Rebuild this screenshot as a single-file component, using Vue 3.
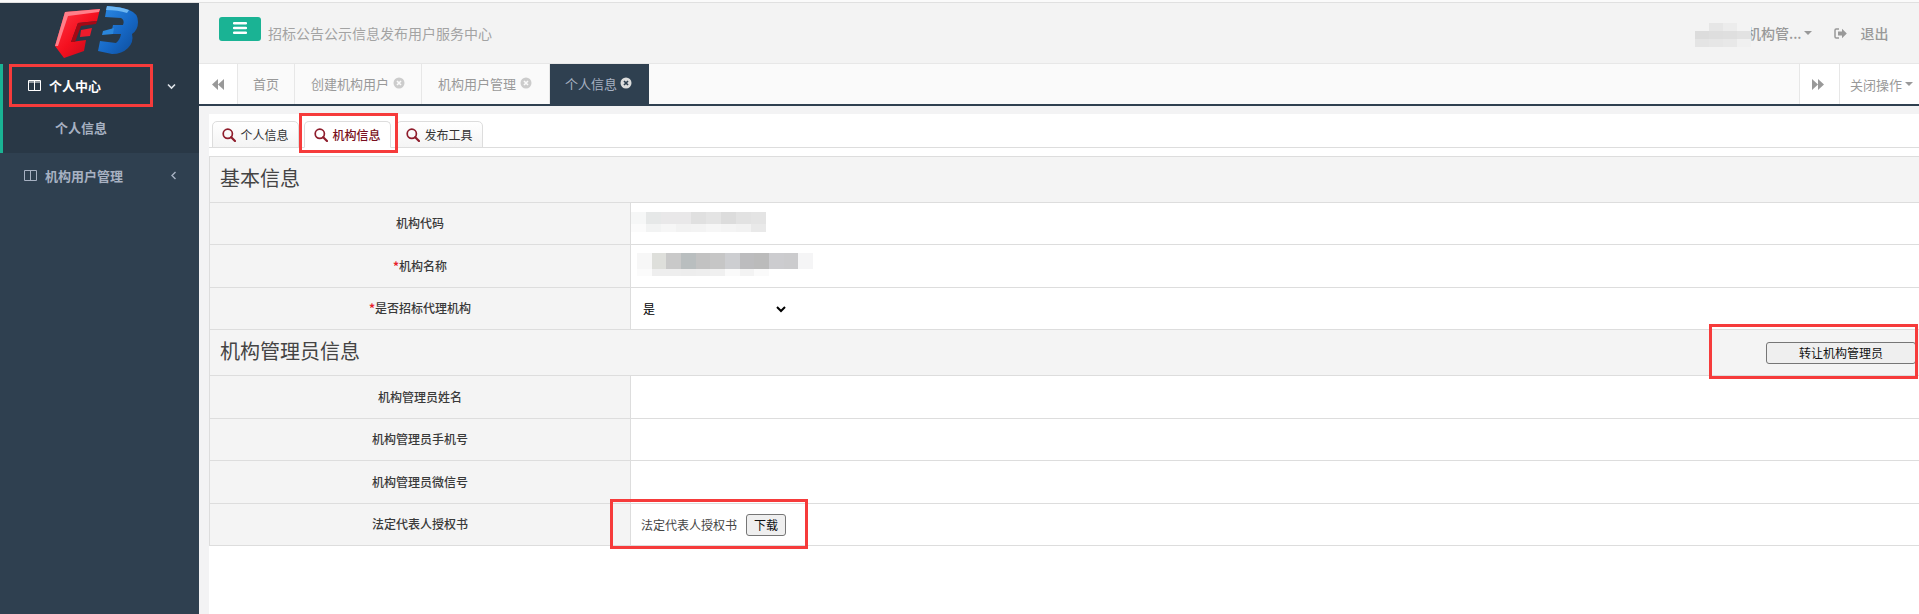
<script setup>
const shades1 = [
  ['#f6f7f7', '#e6e8e8', '#e9e8e9', '#e9e8e9', '#e0e0e0', '#e4e4e4', '#dcdcdc', '#e2e2e2', '#e4e4e4'],
  ['#fbfbfb', '#f2f3f3', '#f6f6f6', '#f2f2f2', '#f3f3f3', '#f6f6f6', '#f4f4f4', '#f2f2f2', '#e9e9e9']
]
const shades2 = [
  ['#f7f7f7', '#dedfdb', '#c9c9c9', '#b9bebf', '#c2c2c2', '#c6c6c6', '#cdced1', '#bcbcbe', '#bbbbbb', '#cccccf', '#cbcbcd', '#f5f5f6'],
  ['#fbfbfb', '#eeeeee', '#eeeeee', '#ededed', '#eeeeee', '#f0f0f0', '#fafafa', '#f3f3f3', '#fafafa', '#ffffff', '#ffffff', '#ffffff']
]
const shades3 = [
  ['#f3f3f3', '#e6e6e6', '#ececec', '#f3f3f3'],
  ['#dcdcdc', '#dedede', '#dfdfdf', '#e2e2e2'],
  ['#e4e4e4', '#e6e6e6', '#e8e8e8', '#f0f0f0']
]
const pageTabs = [
  { name: '创建机构用户', cls: '' },
  { name: '机构用户管理', cls: 'wider' }
]
const innerTabs = [
  { name: '个人信息', active: false },
  { name: '机构信息', active: true },
  { name: '发布工具', active: false }
]
const adminRows = [
  { label: '机构管理员姓名', cls: 'h43' },
  { label: '机构管理员手机号', cls: 'h42' },
  { label: '机构管理员微信号', cls: 'h43' }
]
</script>

<template>
  <div class="page">
    <div class="topline"></div>
    <div class="frame">
      <aside class="sidebar">
        <div class="logo">
          <svg width="88" height="56" viewBox="0 0 88 56">
            <defs>
              <linearGradient id="r" x1="0" y1="0" x2="1" y2="1">
                <stop offset="0" stop-color="#ff3a48" />
                <stop offset="0.5" stop-color="#f5101f" />
                <stop offset="1" stop-color="#b8081a" />
              </linearGradient>
              <linearGradient id="b" x1="0" y1="0" x2="1" y2="1">
                <stop offset="0" stop-color="#2f8de6" />
                <stop offset="0.55" stop-color="#1668c6" />
                <stop offset="1" stop-color="#0d4a96" />
              </linearGradient>
            </defs>
            <path d="M11 8 L46 5 L43 17 L24 19 L17 38 L32 36 L30 47 L10 54 L1 42 Z" fill="url(#r)" />
            <path d="M11 8 L46 5 L45 8 L14 12 L4 42 L1 42 Z" fill="#ff7f8a" />
            <path d="M24 19 L43 17 L42 20 L27 22 L21 38 L17 38 Z" fill="#a50814" />
            <path d="M27 26 L38 24 L36 32 L26 33 Z" fill="#ee1c2c" />
            <path d="M53 2 Q68 3 75 6 Q84 9 84 18 Q84 26 78 30 Q80 38 74 44 Q68 50 58 50 L44 47 L46 37 L62 39 Q66 36 67 30 L57 30 L59 21 L69 21 Q71 16 67 14 L51 13 Z" fill="url(#b)" />
            <path d="M53 2 Q68 3 75 6 L73 9 Q64 6 52 6 Z" fill="#6db6f2" />
            <path d="M49 27 L60 24 L59 30 L48 31 Z" fill="#2a86dc" />
          </svg>
        </div>
        <div class="menu-active">
          <div class="menu-head strong">
            <svg class="col-icon" width="13" height="11" viewBox="0 0 13 11"><path d="M.5.5h12v10H.5zM6.5.5v10M.5 2h12" fill="none" stroke="currentColor" /></svg>
            <span>个人中心</span>
            <svg class="chev" width="9" height="7" viewBox="0 0 9 7"><path d="M1 1.5l3.5 3.5L8 1.5" fill="none" stroke="currentColor" stroke-width="1.6" /></svg>
          </div>
          <div class="submenu">个人信息</div>
        </div>
        <div class="menu-head second">
          <svg class="col-icon" width="13" height="11" viewBox="0 0 13 11"><path d="M.5.5h12v10H.5zM6.5.5v10" fill="none" stroke="currentColor" /></svg>
          <span>机构用户管理</span>
          <svg class="chev" width="7" height="9" viewBox="0 0 7 9"><path d="M5.5 1L2 4.5 5.5 8" fill="none" stroke="currentColor" stroke-width="1.4" /></svg>
        </div>
      </aside>

      <main class="main">
        <header class="header">
          <button class="burger" type="button" aria-label="menu">
            <svg width="14" height="12" viewBox="0 0 14 12"><path d="M1 0h12a1 1 0 0 1 0 2.4H1A1 1 0 0 1 1 0zm0 4.8h12a1 1 0 0 1 0 2.4H1a1 1 0 0 1 0-2.4zm0 4.8h12a1 1 0 0 1 0 2.4H1a1 1 0 0 1 0-2.4z" fill="#fff" /></svg>
          </button>
          <span class="site-title">招标公告公示信息发布用户服务中心</span>
          <div class="header-right">
            <div class="blur user-blur">
              <div v-for="(row, i) in shades3" :key="i" class="blur-row">
                <i v-for="(c, j) in row" :key="j" :style="{ background: c }"></i>
              </div>
            </div>
            <span class="user">机构管...</span>
            <span class="caret"></span>
            <svg class="exit-icon" width="13" height="11" viewBox="0 0 13 11"><path d="M5 1H2.2C1.5 1 1 1.5 1 2.2v6.6C1 9.500 1.500 10 2.200 10H5" fill="none" stroke="#999" stroke-width="1.500" /><path d="M4 3.500h4V.8L12.800 5.500 8 10.200V7.500H4z" fill="#999" /></svg>
            <span class="exit">退出</span>
          </div>
        </header>

        <nav class="tabbar">
          <div class="nav-arrow">
            <svg width="12" height="11" viewBox="0 0 12 11"><path d="M6 0v11L0 5.500zM12 0v11L6 5.500z" fill="#999" /></svg>
          </div>
          <div class="page-tab home">首页</div>
          <div v-for="t in pageTabs" :key="t.name" class="page-tab" :class="t.cls">
            <span>{{ t.name }}</span>
            <svg width="12" height="12" viewBox="0 0 12 12"><circle cx="6" cy="6" r="5.500" fill="#ccc" /><path d="M4 4l4 4M8 4l-4 4" stroke="#fafafa" stroke-width="1.600" /></svg>
          </div>
          <div class="page-tab current">
            <span>个人信息</span>
            <svg width="12" height="12" viewBox="0 0 12 12"><circle cx="6" cy="6" r="5.500" fill="#ddd" /><path d="M4 4l4 4M8 4l-4 4" stroke="#2f4050" stroke-width="1.700" /></svg>
          </div>
          <div class="tab-fill"></div>
          <div class="nav-arrow right">
            <svg width="12" height="11" viewBox="0 0 12 11"><path d="M0 0v11l6-5.500zM6 0v11l6-5.500z" fill="#999" /></svg>
          </div>
          <div class="close-ops">关闭操作<span class="caret small"></span></div>
        </nav>

        <div class="content">
          <div class="inner-tabs">
            <div v-for="t in innerTabs" :key="t.name" class="inner-tab" :class="{ active: t.active }">
              <svg width="14" height="14" viewBox="0 0 14 14"><circle cx="5.800" cy="5.800" r="4.600" fill="none" stroke="#8f1d2c" stroke-width="1.700" /><path d="M9.200 9.200l3.800 3.800" stroke="#8f1d2c" stroke-width="2.200" stroke-linecap="round" /></svg>
              <span>{{ t.name }}</span>
            </div>
          </div>

          <section class="sheet">
            <div class="row section h46"><h3>基本信息</h3></div>
            <div class="row h42">
              <div class="label">机构代码</div>
              <div class="value">
                <div class="blur blur-a">
                  <div v-for="(row, i) in shades1" :key="i" class="blur-row">
                    <i v-for="(c, j) in row" :key="j" :style="{ background: c }"></i>
                  </div>
                </div>
              </div>
            </div>
            <div class="row h43">
              <div class="label"><b class="req">*</b>机构名称</div>
              <div class="value">
                <div class="blur blur-b">
                  <div v-for="(row, i) in shades2" :key="i" class="blur-row">
                    <i v-for="(c, j) in row" :key="j" :style="{ background: c }"></i>
                  </div>
                </div>
              </div>
            </div>
            <div class="row h42">
              <div class="label"><b class="req">*</b>是否招标代理机构</div>
              <div class="value">
                <select class="agent"><option>是</option><option>否</option></select>
              </div>
            </div>
            <div class="row section h46">
              <h3>机构管理员信息</h3>
              <button class="native wide" type="button">转让机构管理员</button>
            </div>
            <div v-for="r in adminRows" :key="r.label" class="row" :class="r.cls">
              <div class="label">{{ r.label }}</div>
              <div class="value"></div>
            </div>
            <div class="row h42">
              <div class="label">法定代表人授权书</div>
              <div class="value file">
                <span>法定代表人授权书</span>
                <button class="native" type="button">下载</button>
              </div>
            </div>
          </section>
        </div>
      </main>
    </div>

    <div class="mark mark-menu"></div>
    <div class="mark mark-tab"></div>
    <div class="mark mark-transfer"></div>
    <div class="mark mark-file"></div>
  </div>
</template>

<style>
html, body { margin: 0; padding: 0; background: #fff; }
</style>

<style scoped>
.page {
  position: relative;
  width: 1919px;
  height: 614px;
  overflow: hidden;
  font-family: "Noto Sans CJK SC", "Liberation Sans", sans-serif;
  font-size: 12px;
  color: #333;
  background: #fff;
}
.topline { height: 3px; box-sizing: border-box; border-bottom: 1px solid #e0e0e0; background: #fafafa; }
.frame { display: flex; height: 611px; }

.sidebar { width: 199px; flex: none; background: #2f4050; font-size: 13px; }
.logo { height: 61px; background: #293846; box-sizing: border-box; padding: 1px 0 0 54px; }
.logo svg { display: block; }
.menu-active { height: 89px; background: #293846; border-left: 3px solid #1ab394; box-sizing: border-box; }
.menu-head { display: flex; align-items: center; font-weight: 700; color: #a7b1c2; position: relative; }
.menu-head.strong { height: 44px; box-sizing: border-box; padding: 0 0 2px 25px; color: #fff; }
.menu-head.second { height: 46px; box-sizing: border-box; padding: 0 0 2px 24px; }
.col-icon { margin-right: 8px; flex: none; }
.menu-head .chev { position: absolute; }
.menu-head.strong .chev { left: 164px; top: 19px; color: #dfe4ea; }
.menu-head.second .chev { left: 170px; top: 18px; }
.submenu { padding-left: 52px; line-height: 40px; height: 44px; color: #a7b1c2; font-weight: 700; }

.main { flex: 1; min-width: 0; display: flex; flex-direction: column; background: #f3f3f4; }
.header {
  height: 61px;
  flex: none;
  box-sizing: border-box;
  border-bottom: 1px solid #e7e7e7;
  background: #f3f3f3;
  padding: 14px 0 0 20px;
  display: flex;
  align-items: flex-start;
  position: relative;
}
.burger {
  width: 42px;
  height: 24px;
  border: 0;
  border-radius: 3px;
  background: #1ab394;
  padding: 0 0 2px;
  display: flex;
  align-items: center;
  justify-content: center;
}
.site-title { margin: 5px 0 0 7px; font-size: 14px; line-height: 22px; color: #a3a3a3; }
.header-right { position: absolute; left: 1496px; top: 0; height: 60px; display: flex; align-items: center; }
.user-blur { width: 56px; margin-top: 4px; }
.user-blur i { height: 8px; }
.blur-row { display: flex; }
.blur-row i { display: block; flex: 1; }
.blur { filter: blur(0.5px); }
.user { margin-left: -4px; font-size: 14px; color: #999; font-weight: 500; line-height: 60px; }
.caret { width: 0; height: 0; border-top: 4px solid #999; border-left: 4px solid transparent; border-right: 4px solid transparent; margin-left: 2px; }
.exit-icon { margin-left: 22px; }
.exit { margin-left: 14px; font-size: 14px; color: #999; font-weight: 500; }

.tabbar { height: 42px; flex: none; box-sizing: border-box; border-bottom: 2px solid #2f4050; background: #fafafa; display: flex; font-size: 13px; color: #999; }
.nav-arrow { width: 39px; flex: none; box-sizing: border-box; background: #fff; border-right: 1px solid #e7e7e7; display: flex; align-items: center; justify-content: center; }
.nav-arrow.right { width: 41px; padding-right: 3px; border-left: 1px solid #e7e7e7; }
.page-tab { display: flex; align-items: center; gap: 4px; padding: 0 16px 2px; border-right: 1px solid #e7e7e7; white-space: nowrap; }
.page-tab.home { padding: 0 15px 2px; }
.page-tab.wider { padding-right: 17px; }
.page-tab.current { background: #2f4050; color: #a7b1c2; border-right: 0; padding: 0 17px 2px 15px; gap: 3px; }
.tab-fill { flex: 1; }
.close-ops { width: 79px; flex: none; box-sizing: border-box; padding-left: 10px; background: #fff; display: flex; align-items: center; }
.caret.small { margin-left: 3px; }

.content { flex: 1; margin: 8px 0 0 10px; background: #fff; min-height: 0; }
.inner-tabs { height: 34px; box-sizing: border-box; border-bottom: 1px solid #ddd; padding: 7px 0 0 3px; display: flex; gap: 5px; }
.inner-tab {
  width: 87px;
  height: 27px;
  box-sizing: border-box;
  border: 1px solid #ddd;
  border-radius: 5px 5px 0 0;
  background: linear-gradient(#fff, #f4f4f4);
  display: flex;
  align-items: center;
  justify-content: center;
  gap: 4px;
  color: #333;
}
.inner-tab.active { background: #fff; border-bottom-color: #fff; color: #7a1020; font-weight: 500; }

.sheet { margin-top: 8px; border-top: 1px solid #ddd; border-left: 1px solid #ddd; }
.row { display: flex; box-sizing: border-box; border-bottom: 1px solid #ddd; }
.h42 { height: 42px; }
.h43 { height: 43px; }
.h46 { height: 46px; }
.section { background: #f4f4f4; align-items: center; justify-content: space-between; padding: 0 3px 0 10px; }
.section h3 { margin: -4px 0 0; font-size: 20px; font-weight: 400; color: #444; line-height: 28px; }
.label { width: 421px; flex: none; box-sizing: border-box; border-right: 1px solid #ddd; background: #f4f4f4; display: flex; align-items: center; justify-content: center; padding-bottom: 2px; font-weight: 500; color: #3a3a3a; }
.req { color: #e8202a; font-weight: 700; }
.value { flex: 1; display: flex; align-items: center; position: relative; }
.blur-a { width: 135px; margin-top: -3px; }
.blur-a .blur-row:first-child i { height: 12px; }
.blur-a .blur-row:last-child i { height: 8px; }
.blur-b { width: 176px; margin-left: 6px; margin-top: -3px; }
.blur-b .blur-row:first-child i { height: 16px; }
.blur-b .blur-row:last-child i { height: 7px; }
.agent { width: 150px; margin-left: 8px; border: 0; background: #fff; font: 12px "Noto Sans CJK SC", sans-serif; color: #000; height: 22px; outline: none; }
.native {
  box-sizing: border-box;
  height: 22px;
  width: 40px;
  padding: 0;
  background: #efefef;
  border: 1px solid #767676;
  border-radius: 3px;
  font: 12px "Noto Sans CJK SC", sans-serif;
  color: #111;
}
.native.wide { width: 150px; }
.file { padding-left: 10px; gap: 9px; color: #444; }

.mark { position: absolute; box-sizing: border-box; border: 3px solid #f63b3b; pointer-events: none; }
.mark-menu { left: 9px; top: 64px; width: 144px; height: 43px; }
.mark-tab { left: 299px; top: 113px; width: 99px; height: 40px; }
.mark-transfer { left: 1709px; top: 324px; width: 209px; height: 55px; }
.mark-file { left: 610px; top: 499px; width: 198px; height: 50px; }
</style>
